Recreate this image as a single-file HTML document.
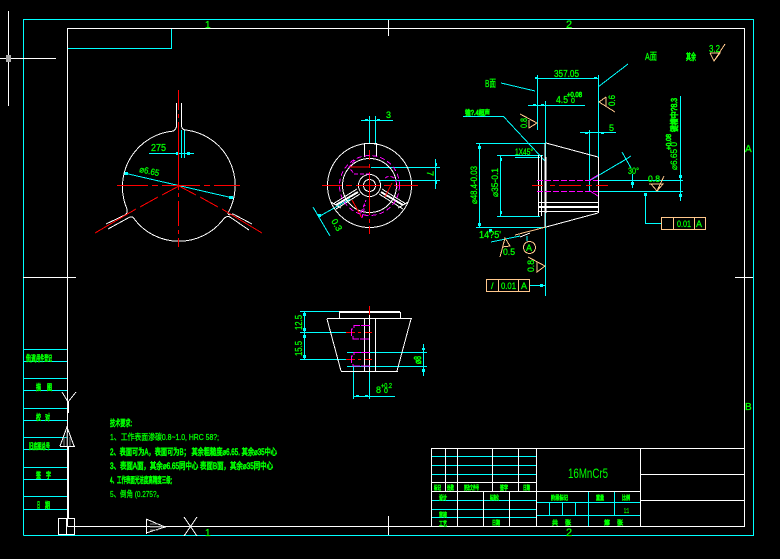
<!DOCTYPE html>
<html><head><meta charset="utf-8"><style>
html,body{margin:0;padding:0;background:#000;width:780px;height:559px;overflow:hidden}
svg{display:block}
text{fill:#00ff00;stroke:#00ff00;stroke-width:.3;font-family:"Liberation Sans","Noto Sans CJK SC",sans-serif}
.b{stroke-width:.7}
</style></head><body>
<svg width="780" height="559" viewBox="0 0 780 559" xmlns="http://www.w3.org/2000/svg" shape-rendering="crispEdges">
<rect width="780" height="559" fill="#000"/>
<!-- cyan -->
<g fill="none" stroke="#00ffff" stroke-width="1">
<path d="M23.5 535.5V19.5H753.5V535.5H23.5"/>
<path d="M67.5 48.5H171.5V28.5"/>
<path d="M24 349.5H67M24 361.5H67M24 378.5H67M24 390.5H67M24 408.5H67M24 420.5H67M24 437.5H67M24 449.5H67M24 467.5H67M24 479.5H67M24 496.5H67M24 509.5H67"/>
<path d="M432 456.5H536M432 465.5H536M432 474.5H536M432 500.5H536M432 509.5H536M432 517.5H536"/>
<path d="M536 502.5H640M536 515.5H640M588.5 491V526M614.5 491V515M549.5 502V515M562.5 502V515M575.5 502V515"/>
<path d="M369.5 116V144M375.5 116V144M361 120.5H393M371 167.5H440M379 180.5H440M435.5 159V189"/>
<path d="M537.5 75V130M545.5 101V296M598.5 75V157M537 78.5H598M528 105.5H585M463 116.5H503M476 143.5H546M497 155.5H543M479.5 143V227M500.5 155V216M476 227.5H546M497 216.5H540M515 157.5H540M589.5 130V192M580 132.5H616M598 180.5H683M598 191.5H683M680.5 96V201M632.5 174V188M645.5 193V223.5H661M530 285.5H546M527 236V241"/>
<path d="M300 311.5H340M300 332.5H347M300 359.5H347M304.5 311V360M347 352.5H427M347 366.5H427M423.5 344V376M353.5 366V399M369.5 366V399M353 396.5H395"/>
<path d="M124 173L233 198M149 153.5H194"/>
<path d="M181.5 130V158M184.5 130V158"/>
<path d="M313 207L330 236M320 216L350 199"/>
<path d="M501 83L535 91M598 87L628 64M503 116L546 162M589 181L628 158M622 152L631 168M620 163L631 156M491 242L520 236"/>
</g>
<g fill="#00ffff">
<rect x="124" y="172" width="4" height="3"/><rect x="229" y="196" width="4" height="3"/><rect x="176" y="152" width="3" height="3"/><rect x="187" y="152" width="3" height="3"/>
<rect x="365" y="119" width="3" height="2"/><rect x="377" y="119" width="3" height="2"/><rect x="435" y="163" width="2" height="3"/><rect x="435" y="181" width="2" height="3"/><rect x="318" y="214" width="3" height="3"/>
<rect x="535" y="77" width="3" height="2"/><rect x="594" y="77" width="3" height="2"/><rect x="533" y="104" width="3" height="2"/><rect x="541" y="104" width="3" height="2"/>
<rect x="478" y="146" width="3" height="3"/><rect x="478" y="223" width="3" height="3"/><rect x="500" y="158" width="2" height="3"/><rect x="500" y="211" width="2" height="3"/>
<rect x="585" y="132" width="3" height="2"/><rect x="601" y="132" width="3" height="2"/>
<rect x="631" y="182" width="3" height="3"/><rect x="679" y="175" width="3" height="3"/><rect x="679" y="194" width="3" height="3"/>
<rect x="644" y="193" width="3" height="3"/><rect x="489" y="229" width="3" height="3"/><rect x="540" y="284" width="3" height="3"/>
<rect x="303" y="313" width="3" height="3"/><rect x="303" y="328" width="3" height="3"/><rect x="303" y="335" width="3" height="3"/><rect x="303" y="355" width="3" height="3"/>
<rect x="422" y="348" width="3" height="2"/><rect x="422" y="369" width="3" height="3"/><rect x="356" y="395" width="3" height="2"/><rect x="365" y="395" width="3" height="2"/>
</g>
<!-- white -->
<g fill="none" stroke="#ffffff" stroke-width="1">
<path d="M67.5 526.5V28.5H744.5V526.5H67.5"/>
<path d="M23 277.5H76M735 277.5H753M388.5 20V36M388.5 516V535"/>
<path d="M8.5 11V106M0 58.5H56"/>
<path d="M431.5 526V448.5H744.5M536.5 448.5V526M640.5 448.5V526M431.5 482.5H536M431.5 491.5H640M445.5 448V491M457.5 448V526M492.5 448V491M518.5 448V491M483.5 491V526M509.5 491V526M640 474.5H745M640 500.5H745"/>
<path d="M364.5 143V157M376.5 143V157M364 143.5H377"/>
<path d="M176.5 103V127M181.5 103V127"/>
<path d="M598.5 157V213M538.5 155V216M541.5 155V216M538 202.5H598M538 211.5H598"/>
<path d="M545 143V227M546 157V213"/>
<path d="M538 206.5H598M538 207.5H598"/>
<path d="M339.5 312V319M400.5 312V319M339 312.5H400M339 311.5H400M327 318.5H412M364.5 319V371M375.5 319V371M369.5 312V371M341 371.5H398"/>
<path d="M58.5 518.5H74.5V534.5H58.5ZM66.5 518V535"/>
<path d="M68.5 402V413M67.5 446V518M68.5 446V518"/>
<path d="M60 446.5H75"/>
<path d="M146.5 519V534"/>
<path d="M173 131Q176 130 176.5 126M186 130Q182 130 181.5 126"/>
<path d="M186 130A56 56 0 0 1 228 213Q228 216 233 214M174 131A56 56 0 0 0 127 209Q128 213 125 215M130 217Q133 216 135 220A56 56 0 0 0 222 221Q226 215 230 217"/>
<path d="M106 224L125 215M108 229L130 217M252 224L233 214M249 230L230 217"/>
<circle cx="369.5" cy="185.5" r="42"/><circle cx="369.5" cy="185.5" r="27"/><circle cx="369.5" cy="185.5" r="11"/><circle cx="369.5" cy="185.5" r="6"/>
<path d="M333 204L357 189M336 209L360 194M406 204L382 189M403 209L379 194M331 202L341 208M408 202L398 208"/>
<path d="M336 205L358 192M403 205L381 192" stroke-width="2"/>
<path d="M546 143L598 157M546 227L598 213"/>
<path d="M327 319L341 371M411 319L397 371"/>
<path d="M62 392L68 402L76 392"/>
<path d="M60 446L67 427L74 446"/>
<path d="M146 519L165 527L146 533"/>
<path d="M184 517L197 536M197 517L184 536"/>
<path d="M520 237L530 233"/>
</g>
<g fill="none" stroke="#888" stroke-width="1"><path d="M67 432V446M64 437V446M70 437V446M150 527H163M150 524H158M150 530H158"/></g>
<path d="M6 55h5v7h-5z" fill="#aaa"/>
<!-- red -->
<g fill="none" stroke="#ff0000" stroke-width="1">
<path d="M178.5 90V110M178.5 114V118M178.5 122V190M178.5 193V197M178.5 201V226M178.5 230V234M178.5 238V247"/>
<path d="M117 185.5H148M152 185.5H158M162 185.5H200M204 185.5H210M214 185.5H240"/>
<path d="M369.5 150V160M369.5 164V168M369.5 172V215M369.5 219V223M369.5 226V234M322 185.5H342M346 185.5H352M356 185.5H380M384 185.5H390M394 185.5H418"/>
<path d="M532 185.5H543M550 185.5H555M559 185.5H581M586 185.5H592M596 185.5H608"/>
<path d="M369.5 306V315M346 332.5H355M358 332.5H361M365 332.5H372M346 359.5H355M358 359.5H361M365 359.5H372"/>
<path d="M179 186L162 195M158 197L140 207M136 209L95 233M179 186L196 195M200 197L218 207M222 209L262 233"/>
<path d="M352 200L362 218M392 183L385 197M349 167H370"/>
</g>
<!-- magenta -->
<g fill="none" stroke="#ff00ff" stroke-width="1">
<circle cx="369.5" cy="185.5" r="30" stroke-dasharray="5 3"/>
<path d="M355 160L349 167L354 174H370M385 178Q391 174 396 180L397 188M362 218L365 205M361 213L366 200" stroke-dasharray="4 2"/>
<path d="M537 180.5H598M537 191.5H598" stroke-dasharray="6 2"/>
<path d="M590 180L598 175M590 191L598 196"/>
<path d="M370 325.5H354V328M351 329H353M353 336V339H370M370 352.5H354V355M351 356H353M353 364V366H370" stroke-dasharray="9 1"/>
<path d="M351.5 329V336M351.5 356V363"/>
</g>
<!-- peach -->
<g fill="none" stroke="#ffc88c" stroke-width="1">
<path d="M520 114L537 123L529 128V120"/>
<path d="M606 97L599 102L615 112M606 97V106"/>
<path d="M710 53H720L714 61L710 53M714 61L725 44"/>
<path d="M649 184H663L657 191L651 184M657 191L664 176"/>
<path d="M500 257L505 238L510 246L502 247"/>
<circle cx="529.5" cy="247.5" r="6"/>
<path d="M528 257L545 266L537 272V262"/>
<path d="M515 235L546 227"/>
<rect x="486.5" y="279.5" width="43" height="12"/><path d="M498.5 280V291M518.5 280V291"/>
<rect x="661.5" y="217.5" width="44" height="12"/><path d="M673.5 218V229M694.5 218V229"/>
</g>
<!-- text -->
<g>
<text x="205" y="28" font-size="10">1</text>
<text x="566" y="28" font-size="11">2</text>
<text x="566" y="536" font-size="11">2</text>
<text x="205" y="536" font-size="10">1</text>
<text x="745" y="152" font-size="10">A</text>
<text x="745" y="410" font-size="10">B</text>
<text x="151" y="151" font-size="10" textLength="15" lengthAdjust="spacingAndGlyphs">275</text>
<text x="139" y="172" font-size="9" textLength="20" lengthAdjust="spacingAndGlyphs" transform="rotate(12 139 172)">⌀6.65</text>
<text x="386" y="118" font-size="9" textLength="5" lengthAdjust="spacingAndGlyphs">3</text>
<text x="427" y="171" font-size="9" transform="rotate(90 427 171)">7</text>
<text x="331" y="221" font-size="9" transform="rotate(60 331 221)">0.3</text>
<text x="485" y="87" font-size="10" textLength="11" lengthAdjust="spacingAndGlyphs">B面</text>
<text x="554" y="77" font-size="10" textLength="25" lengthAdjust="spacingAndGlyphs">357.05</text>
<text x="645" y="60" font-size="10" textLength="12" lengthAdjust="spacingAndGlyphs">A面</text>
<text x="686" y="60" font-size="9" class="b" textLength="10" lengthAdjust="spacingAndGlyphs">其余</text>
<text x="709" y="52" font-size="10" textLength="11" lengthAdjust="spacingAndGlyphs">3.2</text>
<text x="556" y="103" font-size="10" textLength="12" lengthAdjust="spacingAndGlyphs">4.5</text>
<text x="567" y="97" font-size="7" class="b" textLength="15" lengthAdjust="spacingAndGlyphs">+0.08</text>
<text x="571" y="103" font-size="7">0</text>
<text x="465" y="115" font-size="7" class="b" textLength="25" lengthAdjust="spacingAndGlyphs">锥?.4超声</text>
<text x="609" y="131" font-size="9" textLength="5" lengthAdjust="spacingAndGlyphs">5</text>
<text x="515" y="155" font-size="9" textLength="18" lengthAdjust="spacingAndGlyphs">1X45°</text>
<text x="527" y="128" font-size="9" textLength="10" lengthAdjust="spacingAndGlyphs" transform="rotate(-90 527 128)">0.8</text>
<text x="615" y="106" font-size="9" textLength="11" lengthAdjust="spacingAndGlyphs" transform="rotate(-90 615 106)">0.6</text>
<text x="477" y="204" font-size="9" textLength="38" lengthAdjust="spacingAndGlyphs" transform="rotate(-90 477 204)">⌀48.4-0.03</text>
<text x="498" y="197" font-size="9" textLength="29" lengthAdjust="spacingAndGlyphs" transform="rotate(-90 498 197)">⌀35-0.1</text>
<text x="479" y="238" font-size="10" textLength="22" lengthAdjust="spacingAndGlyphs">14?5'</text>
<text x="503" y="255" font-size="9" textLength="12" lengthAdjust="spacingAndGlyphs">0.5</text>
<text x="526" y="251" font-size="9">A</text>
<text x="534" y="272" font-size="9" textLength="12" lengthAdjust="spacingAndGlyphs" transform="rotate(-90 534 272)">0.8</text>
<text x="491" y="289" font-size="9">/</text>
<text x="501" y="289" font-size="9" textLength="15" lengthAdjust="spacingAndGlyphs">0.01</text>
<text x="521" y="289" font-size="9">A</text>
<text x="628" y="174" font-size="9" textLength="11" lengthAdjust="spacingAndGlyphs">30°</text>
<text x="648" y="182" font-size="9" textLength="12" lengthAdjust="spacingAndGlyphs">0.8</text>
<text x="677" y="132" font-size="8" class="b" textLength="34" lengthAdjust="spacingAndGlyphs" transform="rotate(-90 677 132)">键槽中?8.3</text>
<text x="677" y="170" font-size="9" textLength="28" lengthAdjust="spacingAndGlyphs" transform="rotate(-90 677 170)">⌀6.65 0</text>
<text x="671" y="150" font-size="7" class="b" textLength="16" lengthAdjust="spacingAndGlyphs" transform="rotate(-90 671 150)">+0.08</text>
<text x="677" y="227" font-size="9" textLength="14" lengthAdjust="spacingAndGlyphs">0.01</text>
<text x="696" y="227" font-size="9">A</text>
<text x="302" y="330" font-size="10" textLength="15" lengthAdjust="spacingAndGlyphs" transform="rotate(-90 302 330)">12.5</text>
<text x="302" y="356" font-size="10" textLength="15" lengthAdjust="spacingAndGlyphs" transform="rotate(-90 302 356)">15.5</text>
<text x="421" y="364" font-size="10" class="b" textLength="8" lengthAdjust="spacingAndGlyphs" transform="rotate(-90 421 364)">⌀8</text>
<text x="376" y="393" font-size="9">8</text>
<text x="381" y="388" font-size="7" textLength="11" lengthAdjust="spacingAndGlyphs">+0.2</text>
<text x="384" y="393" font-size="7">0</text>
<text x="110" y="426" font-size="8.5" class="b" textLength="22" lengthAdjust="spacingAndGlyphs">技术要求:</text>
<text x="110" y="440" font-size="8.5" textLength="109" lengthAdjust="spacingAndGlyphs">1、工作表面渗碳0.8~1.0, HRC 58?;</text>
<text x="110" y="455" font-size="9" class="b" textLength="167" lengthAdjust="spacingAndGlyphs">2、表面可为A，表面可为B； 其余粗糙度⌀6.65. 其余⌀35中心</text>
<text x="110" y="469" font-size="9" class="b" textLength="163" lengthAdjust="spacingAndGlyphs">3、表面A面，其余⌀6.65同中心 表面B面，其余⌀35同中心</text>
<text x="110" y="483" font-size="8.5" class="b" textLength="62" lengthAdjust="spacingAndGlyphs">4、工作表面光洁度高精度三级;</text>
<text x="110" y="497" font-size="8.5" textLength="53" lengthAdjust="spacingAndGlyphs">5、倒角 (0.275?。</text>
<text x="568" y="478" font-size="14" style="stroke-width:0" textLength="40" lengthAdjust="spacingAndGlyphs">16MnCr5</text>
<text x="26" y="361" font-size="8" class="b" textLength="26" lengthAdjust="spacingAndGlyphs">借(通)用件登记</text>
<text x="36" y="390" font-size="8" class="b" textLength="5" lengthAdjust="spacingAndGlyphs">描</text><text x="47" y="390" font-size="8" class="b" textLength="5" lengthAdjust="spacingAndGlyphs">图</text>
<text x="36" y="420" font-size="8" class="b" textLength="5" lengthAdjust="spacingAndGlyphs">校</text><text x="45" y="420" font-size="8" class="b" textLength="5" lengthAdjust="spacingAndGlyphs">对</text>
<text x="29" y="449" font-size="8" class="b" textLength="21" lengthAdjust="spacingAndGlyphs">旧底图总号</text>
<text x="36" y="478" font-size="8" class="b" textLength="5" lengthAdjust="spacingAndGlyphs">签</text><text x="46" y="478" font-size="8" class="b" textLength="5" lengthAdjust="spacingAndGlyphs">字</text>
<text x="37" y="508" font-size="8" class="b" textLength="3" lengthAdjust="spacingAndGlyphs">日</text><text x="45" y="508" font-size="8" class="b" textLength="5" lengthAdjust="spacingAndGlyphs">期</text>
<text x="434" y="490" font-size="6" class="b" textLength="7" lengthAdjust="spacingAndGlyphs">标记</text>
<text x="447" y="490" font-size="6" class="b" textLength="7" lengthAdjust="spacingAndGlyphs">处数</text>
<text x="464" y="490" font-size="6" class="b" textLength="15" lengthAdjust="spacingAndGlyphs">更改文件号</text>
<text x="500" y="490" font-size="6" class="b" textLength="8" lengthAdjust="spacingAndGlyphs">签字</text>
<text x="523" y="490" font-size="6" class="b" textLength="7" lengthAdjust="spacingAndGlyphs">日期</text>
<text x="439" y="500" font-size="6" class="b" textLength="8" lengthAdjust="spacingAndGlyphs">设计</text>
<text x="490" y="500" font-size="6" class="b" textLength="9" lengthAdjust="spacingAndGlyphs">标准化</text>
<text x="551" y="500" font-size="6" class="b" textLength="17" lengthAdjust="spacingAndGlyphs">阶段标记</text>
<text x="596" y="500" font-size="6" class="b" textLength="8" lengthAdjust="spacingAndGlyphs">重量</text>
<text x="622" y="500" font-size="6" class="b" textLength="8" lengthAdjust="spacingAndGlyphs">比例</text>
<text x="624" y="513" font-size="7" textLength="5" lengthAdjust="spacingAndGlyphs">1:1</text>
<text x="439" y="517" font-size="6" class="b" textLength="8" lengthAdjust="spacingAndGlyphs">审核</text>
<text x="439" y="526" font-size="6" class="b" textLength="8" lengthAdjust="spacingAndGlyphs">工艺</text>
<text x="492" y="525" font-size="6" class="b" textLength="8" lengthAdjust="spacingAndGlyphs">日期</text>
<text x="552" y="525" font-size="6" class="b">共</text><text x="565" y="525" font-size="6" class="b">张</text>
<text x="604" y="525" font-size="6" class="b">第</text><text x="617" y="525" font-size="6" class="b">张</text>
</g>
</svg>
</body></html>
